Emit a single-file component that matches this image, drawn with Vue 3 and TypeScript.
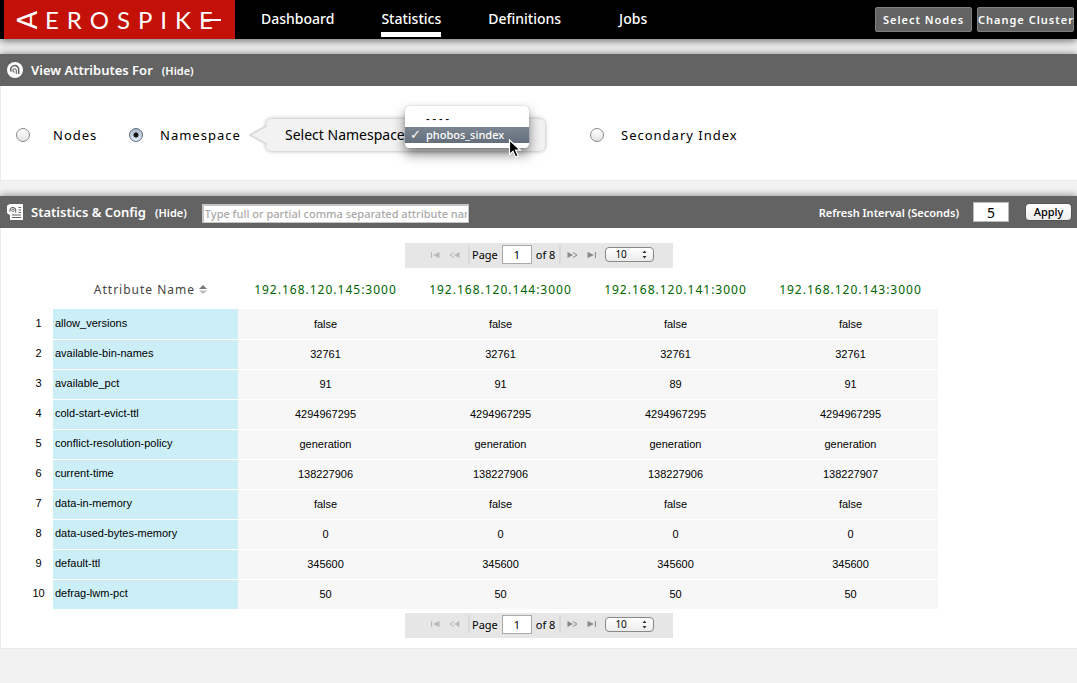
<script setup lang="ts">
import { ref } from 'vue'

interface Row {
  name: string
  values: string[]
}

const navItems: string[] = ['Dashboard', 'Statistics', 'Definitions', 'Jobs']
const activeNav = ref('Statistics')
const scope = ref('namespace')
const namespace = ref('phobos_sindex')
const namespaces: string[] = ['----', 'phobos_sindex']
const interval = ref('5')
const filter = ref('')
const page = ref('1')
const pageSize = ref('10')

const nodes: string[] = [
  '192.168.120.145:3000',
  '192.168.120.144:3000',
  '192.168.120.141:3000',
  '192.168.120.143:3000',
]

const same = (v: string): string[] => [v, v, v, v]

const rows: Row[] = [
  { name: 'allow_versions', values: same('false') },
  { name: 'available-bin-names', values: same('32761') },
  { name: 'available_pct', values: ['91', '91', '89', '91'] },
  { name: 'cold-start-evict-ttl', values: same('4294967295') },
  { name: 'conflict-resolution-policy', values: same('generation') },
  { name: 'current-time', values: ['138227906', '138227906', '138227906', '138227907'] },
  { name: 'data-in-memory', values: same('false') },
  { name: 'data-used-bytes-memory', values: same('0') },
  { name: 'default-ttl', values: same('345600') },
  { name: 'defrag-lwm-pct', values: same('50') },
]
</script>

<template>
  <div class="page">
    <header class="topbar">
      <a href="#" class="logo" aria-label="Aerospike">
        <span class="logo-a">A</span>
        <span class="logo-rest">EROSPIKE</span>
        <span class="logo-bar"></span>
      </a>
      <nav class="nav">
        <a
          v-for="item in navItems"
          :key="item"
          href="#"
          :class="['nav-link', { active: item === activeNav }]"
          @click.prevent="activeNav = item"
        >{{ item }}</a>
      </nav>
      <div class="actions">
        <button type="button" class="dark-btn">Select Nodes</button>
        <button type="button" class="dark-btn">Change Cluster</button>
      </div>
    </header>

    <section class="section">
      <div class="bar">
        <svg class="bar-icon" viewBox="0 0 16 16" aria-hidden="true">
          <circle cx="8" cy="8" r="8" fill="#fff" />
          <path d="M4.200 9.500A4 4 0 1 1 11.700 8V12" fill="none" stroke="#636363" stroke-width="1.500" />
          <path d="M9.300 12V8.400A1.700 1.700 0 1 0 7.600 10.200" fill="none" stroke="#636363" stroke-width="1.100" />
        </svg>
        <h2 class="bar-title">View Attributes For</h2>
        <a href="#" class="hide-link">(Hide)</a>
      </div>
      <div class="scope-panel">
        <label class="scope nodes">
          <input v-model="scope" type="radio" name="scope" value="nodes" class="radio" />
          <span>Nodes</span>
        </label>
        <label class="scope ns">
          <input v-model="scope" type="radio" name="scope" value="namespace" class="radio" />
          <span>Namespace</span>
        </label>
        <div class="callout">
          <svg class="callout-tip" viewBox="0 0 20 32" aria-hidden="true">
            <path d="M20 6L2 16L20 26Z" fill="#f2f2f2" />
            <path d="M19 6.500L2 16L19 25.500" fill="none" stroke="#dcdcdc" stroke-width="2" />
          </svg>
          <label class="callout-label" for="ns-select">Select Namespace</label>
          <div class="ns-picker">
            <select id="ns-select" v-model="namespace" class="ns-select">
              <option v-for="n in namespaces" :key="n" :value="n">{{ n }}</option>
            </select>
            <ul class="menu">
              <li
                v-for="n in namespaces"
                :key="n"
                :class="['menu-item', { picked: n === namespace, blank: n === '----' }]"
                @click="namespace = n"
              >
                <span class="tick">{{ n === namespace ? '✓' : '' }}</span>{{ n }}
              </li>
            </ul>
            <svg class="cursor" viewBox="0 0 14 20" aria-hidden="true">
              <path d="M1.500 1v14.500l3.500-3.300l2.500 5.800l2.600-1.100l-2.500-5.700h4.800Z" fill="#000" stroke="#fff" stroke-width="1.200" />
            </svg>
          </div>
        </div>
        <label class="scope sindex">
          <input v-model="scope" type="radio" name="scope" value="sindex" class="radio" />
          <span>Secondary Index</span>
        </label>
      </div>
    </section>

    <section class="section">
      <div class="bar">
        <svg class="bar-icon" viewBox="0 0 16 16" aria-hidden="true">
          <path d="M5 0H16V16H3V11A5.600 5.600 0 0 1 5 0Z" fill="#fff" />
          <path d="M3.200 7.600A2.900 2.900 0 1 1 8.700 6V8.800" fill="none" stroke="#636363" stroke-width="1.100" />
          <circle cx="5.900" cy="6.300" r="1.200" fill="none" stroke="#636363" stroke-width="0.900" />
          <path d="M11.500 3.500H14M11.500 6H14M11.500 8.500H14M5 11h9M5 13.500h9" stroke="#636363" stroke-width="1" />
        </svg>
        <h2 class="bar-title">Statistics &amp; Config</h2>
        <a href="#" class="hide-link">(Hide)</a>
        <input
          v-model="filter"
          type="text"
          class="filter"
          aria-label="Attribute filter"
          placeholder="Type full or partial comma separated attribute names"
        />
        <label class="refresh-label" for="interval">Refresh Interval (Seconds)</label>
        <input id="interval" v-model="interval" type="text" class="interval" />
        <button type="button" class="apply">Apply</button>
      </div>

      <div class="stats-panel">
        <div class="grid">
          <template v-for="pos in ['top', 'bottom']" :key="pos">
            <div :class="['pager', pos]">
              <button type="button" class="pg-btn off" aria-label="First page">
                <svg viewBox="0 0 11 8"><path d="M1.500 1v6" stroke="currentColor" /><path d="M9.500 1v6L3 4Z" fill="currentColor" /></svg>
              </button>
              <button type="button" class="pg-btn off" aria-label="Previous page">
                <svg viewBox="0 0 11 8"><path d="M5 1.500L1 4L5 6.500" fill="none" stroke="currentColor" /><path d="M10.500 1v6L5 4Z" fill="currentColor" /></svg>
              </button>
              <span class="pg-sep"></span>
              <label class="pg-text" :for="'page-' + pos">Page</label>
              <input :id="'page-' + pos" v-model="page" type="text" class="pg-input" />
              <span class="pg-text">of 8</span>
              <span class="pg-sep wide"></span>
              <button type="button" class="pg-btn" aria-label="Next page">
                <svg viewBox="0 0 11 8"><path d="M.5 1v6L6 4Z" fill="currentColor" /><path d="M6 1.500L10 4L6 6.500" fill="none" stroke="currentColor" /></svg>
              </button>
              <button type="button" class="pg-btn" aria-label="Last page">
                <svg viewBox="0 0 11 8"><path d="M1.500 1v6L8 4Z" fill="currentColor" /><path d="M9.500 1v6" stroke="currentColor" /></svg>
              </button>
              <span class="size-wrap">
                <select v-model="pageSize" class="pg-size" aria-label="Rows per page">
                  <option value="10">10</option>
                  <option value="20">20</option>
                </select>
                <svg class="size-arrows" viewBox="0 0 5 9" aria-hidden="true">
                  <path d="M.5 3L2.500 .5L4.500 3ZM.5 6L2.500 8.500L4.500 6Z" fill="#333" />
                </svg>
              </span>
            </div>
            <table v-if="pos === 'top'" class="table">
              <thead>
                <tr>
                  <th class="num"></th>
                  <th class="attr-head">
                    Attribute Name
                    <svg class="sort" viewBox="0 0 8 9" aria-hidden="true">
                      <path d="M0 4L4 0L8 4Z" fill="#777" />
                      <path d="M0 5.500H8L4 9Z" fill="#bbb" />
                    </svg>
                  </th>
                  <th v-for="n in nodes" :key="n" class="node">{{ n }}</th>
                </tr>
              </thead>
              <tbody>
                <tr v-for="(r, i) in rows" :key="r.name">
                  <td class="num">{{ i + 1 }}</td>
                  <td class="attr">{{ r.name }}</td>
                  <td v-for="(v, j) in r.values" :key="j" class="val">{{ v }}</td>
                </tr>
              </tbody>
            </table>
          </template>
        </div>
      </div>
    </section>
  </div>
</template>

<style>
body {
  margin: 0;
  background: #f2f2f2;
}
</style>

<style scoped>
.page {
  font-family: 'Noto Sans', 'Open Sans', sans-serif;
  color: #000;
}
.page *,
.page *::before {
  box-sizing: border-box;
}
a {
  color: inherit;
  text-decoration: none;
}
button,
input,
select {
  font-family: inherit;
  margin: 0;
}
.topbar {
  display: flex;
  height: 39px;
  padding: 0 3px 0 4px;
  background: #000;
  box-shadow: 0 2px 8px rgba(0, 0, 0, 0.55);
}
.logo {
  position: relative;
  display: flex;
  align-items: center;
  width: 231px;
  padding-left: 11px;
  background: #c41108;
  color: #fff;
  font: 24px/38px Lato, sans-serif;
}
.logo-a {
  display: block;
  width: 24px;
  margin-right: 6px;
  font-size: 27px;
  text-align: center;
  line-height: 24px;
  transform: rotate(-90deg);
}
.logo-rest {
  letter-spacing: 8px;
}
.logo-bar {
  position: absolute;
  left: 198px;
  top: 19px;
  width: 19px;
  height: 2px;
  background: #fff;
}
.nav {
  display: flex;
  gap: 47px;
  padding-left: 26px;
}
.nav-link {
  height: 37px;
  border-bottom: 5px solid transparent;
  color: #fff;
  font-size: 14px;
  font-weight: 500;
  line-height: 38px;
}
.nav-link:last-child {
  margin-left: 11px;
}
.nav-link.active {
  border-bottom-color: #fff;
}
.actions {
  display: flex;
  gap: 5px;
  margin-left: auto;
  padding-top: 7px;
}
.dark-btn {
  width: 97px;
  height: 25px;
  padding: 0;
  border: 1px solid #808080;
  border-radius: 2px;
  background: #636363;
  color: #fff;
  font-size: 11px;
  font-weight: 600;
  letter-spacing: 1px;
  white-space: nowrap;
}
.section {
  margin-top: 15px;
  border-bottom: 1px solid #e9e9e9;
}
.bar {
  display: flex;
  align-items: center;
  height: 32px;
  padding: 0 5px 0 7px;
  background: #636363;
  color: #fff;
  box-shadow: 0 -1px 7px rgba(0, 0, 0, 0.4);
}
.bar-icon {
  width: 16px;
  height: 16px;
  margin-right: 8px;
}
.bar-title {
  margin: 0;
  font-size: 13px;
  font-weight: 600;
}
.hide-link {
  margin-left: 9px;
  font-size: 11px;
  font-weight: 600;
}
.scope-panel {
  position: relative;
  display: flex;
  align-items: center;
  height: 94px;
  border-left: 1px solid #ececec;
  background: #fff;
  padding: 3px 0 0 15px;
  font-size: 13px;
  letter-spacing: 1px;
}
.scope {
  display: flex;
  align-items: center;
}
.radio {
  appearance: none;
  width: 14px;
  height: 14px;
  border: 1px solid #8a8a8a;
  border-radius: 50%;
  background: linear-gradient(#fff, #e4e4e4);
}
.radio:checked {
  border-color: #5d6a7c;
  background: radial-gradient(circle, #111 0 2px, transparent 3px), linear-gradient(#a9b8cb, #dde8f2);
}
.nodes {
  width: 113px;
  gap: 23px;
}
.ns {
  width: 121px;
  gap: 17px;
}
.callout {
  position: relative;
  display: flex;
  align-items: center;
  width: 279px;
  height: 32px;
  margin-left: 16px;
  margin-right: 45px;
  padding-left: 19px;
  border-radius: 5px;
  background: #f2f2f2;
  box-shadow: 0 0 4px rgba(0, 0, 0, 0.35);
}
.callout-tip {
  position: absolute;
  left: -18px;
  top: 0;
  width: 20px;
  height: 32px;
}
.callout-label {
  width: 120px;
  font-size: 14px;
  letter-spacing: 0;
  white-space: nowrap;
}
.ns-picker {
  position: relative;
  width: 124px;
  height: 20px;
  letter-spacing: 0;
}
.ns-select {
  display: block;
  width: 100%;
  height: 20px;
  font-size: 11px;
}
.menu {
  position: absolute;
  left: 0;
  top: -19px;
  width: 124px;
  margin: 0;
  padding: 5px 0;
  border-radius: 4px;
  background: #fff;
  box-shadow: 0 6px 12px rgba(0, 0, 0, 0.5), 0 0 1px rgba(0, 0, 0, 0.4);
  list-style: none;
  font-size: 11px;
  font-weight: 500;
  line-height: 15px;
}
.menu-item {
  display: flex;
  height: 16px;
}
.menu-item.blank {
  letter-spacing: 3px;
}
.menu-item.picked {
  background: linear-gradient(#7b8491, #656e7b);
  color: #fff;
}
.tick {
  width: 21px;
  padding-left: 5px;
  font-family: 'DejaVu Sans', sans-serif;
  font-size: 13px;
}
.cursor {
  position: absolute;
  left: 103px;
  top: 14px;
  width: 14px;
  height: 20px;
}
.sindex {
  gap: 17px;
}
.filter {
  width: 267px;
  height: 19px;
  margin: 2px 0 0 15px;
  padding: 0 1px;
  border: 2px solid #c4c4c4;
  border-right-width: 1px;
  border-bottom-width: 1px;
  background: #fff;
  font-size: 11px;
  font-weight: 500;
}
.filter::placeholder {
  color: #a9a9a9;
}
.refresh-label {
  margin-left: auto;
  font-size: 11px;
  font-weight: 600;
}
.interval {
  width: 36px;
  height: 20px;
  margin: 0 16px 0 14px;
  padding: 0;
  border: 1px solid #bbb;
  background: #fff;
  font-size: 14px;
  text-align: center;
}
.apply {
  width: 47px;
  height: 18px;
  padding: 0;
  border: 1px solid #555;
  border-radius: 4px;
  background: linear-gradient(#fff, #ececec);
  color: #000;
  font-size: 11px;
  font-weight: 500;
  line-height: 16px;
}
.stats-panel {
  border-left: 1px solid #ececec;
  background: #fff;
  padding: 15px 0 10px 23px;
}
.grid {
  width: 914px;
}
.pager {
  display: flex;
  align-items: center;
  width: 268px;
  height: 25px;
  margin-left: 381px;
  padding: 0 0 2px 25px;
  background: #e6e6e6;
  font-size: 11px;
}
.pager.bottom {
  margin-top: 3px;
}
.pg-btn {
  display: flex;
  width: 11px;
  height: 8px;
  margin-right: 8px;
  padding: 0;
  border: 0;
  background: none;
  color: #888;
}
.pg-btn.off {
  color: #b9b9b9;
}
.pg-btn svg {
  width: 11px;
  height: 8px;
}
.pg-sep {
  width: 2px;
  height: 18px;
  margin-right: 2px;
  background: #d9d9d9;
}
.pg-sep.wide {
  margin-right: 6px;
}
.pg-text {
  margin-right: 4px;
}
.pg-input {
  width: 30px;
  height: 19px;
  margin-right: 4px;
  padding: 0;
  border: 1px solid #aaa;
  background: #fff;
  font-size: 11px;
  text-align: center;
}
.size-wrap {
  position: relative;
  display: flex;
}
.pg-size {
  appearance: none;
  width: 49px;
  height: 15px;
  padding: 0 0 0 9px;
  border: 1px solid #888;
  border-radius: 4px;
  background: linear-gradient(#fff, #ececec);
  font-size: 10px;
  line-height: 13px;
}
.size-arrows {
  position: absolute;
  right: 7px;
  top: 3px;
  width: 5px;
  height: 9px;
}
.table {
  width: 100%;
  border-collapse: collapse;
  table-layout: fixed;
  font: 11px/14px 'Liberation Sans', Arial, sans-serif;
}
th {
  height: 41px;
  padding: 2px 0 0;
  font-family: 'Noto Sans', sans-serif;
  font-size: 12px;
  font-weight: 400;
  letter-spacing: 1px;
}
td {
  height: 30px;
  padding: 0;
  border-bottom: 1px solid #fff;
}
td.num,
td.attr {
  padding-bottom: 2px;
}
.num {
  width: 29px;
  text-align: center;
}
.attr-head {
  width: 185px;
  padding-left: 10px;
  color: #444;
}
.sort {
  width: 8px;
  height: 9px;
}
.node {
  color: #006400;
}
td.attr {
  padding-left: 2px;
  background: #cceef7;
}
.val {
  background: #f7f7f7;
  text-align: center;
}
</style>
